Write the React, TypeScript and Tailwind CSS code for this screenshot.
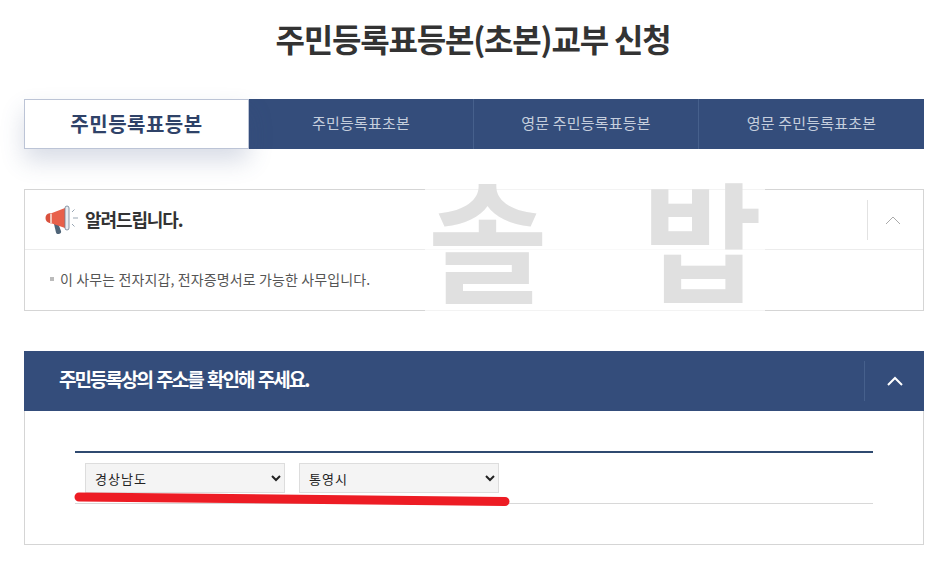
const tabs = ["주민등록표초본", "영문 주민등록표등본", "영문 주민등록표초본"];

function Megaphone() {
  return (
    <svg width="34" height="30" viewBox="0 0 34 30" className="shrink-0">
      <path d="M9 19l4-1 3 8c.5 1.500-.5 2.500-2 3-1.500.4-2.500-.2-3-1.500z" fill="#4f6478" />
      <path d="M20 3v20L7 18.500V8z" fill="#e8604a" />
      <path d="M7 8v10.500l-2.500-.5C2 17.500.5 15.500.5 13S2 8.500 4.500 8.300z" fill="#d9513d" />
      <path d="M5 8.500h2v10H5z" fill="#f4c4b8" />
      <rect x="20" y="1" width="4" height="24" rx="2" fill="#e9edf2" stroke="#6d7f92" strokeWidth="0.8" />
      <path d="M27 7l2.500-2.500M28 13h5M27 19l2.500 2.500" stroke="#9aa7b4" strokeWidth="1" fill="none" />
    </svg>
  );
}

function Chevron({ className, weight }: { className: string; weight: number }) {
  return (
    <svg width="16" height="10" viewBox="0 0 16 10" className={className} fill="none" stroke="currentColor" strokeWidth={weight}>
      <path d="M1 9l7-7 7 7" />
    </svg>
  );
}

export default function App() {
  return (
    <div className="relative h-[575px] w-[948px] overflow-hidden bg-white px-6 font-['Noto_Sans_CJK_KR','Noto_Sans',sans-serif]">
      <h1 className="flex h-[99px] items-start justify-center pr-[2px] pt-[13px] text-[32px] font-bold leading-[50px] tracking-[-1.2px] text-[#333333]">
        주민등록표등본(초본)교부 신청
      </h1>

      <div className="grid h-[50px] grid-cols-4 bg-[#344d7b]">
        <div className="flex items-center justify-center border border-[#bcc4d6] bg-white text-[20px] font-bold tracking-[0.5px] text-[#2f4268] shadow-[0_12px_24px_rgba(60,80,130,0.2)]">
          주민등록표등본
        </div>
        {tabs.map((tab) => (
          <div key={tab} className="flex items-center justify-center border-r border-[#46608c] pb-[2px] text-[15px] tracking-[0.2px] text-[#c5cedd] last:border-r-0">
            {tab}
          </div>
        ))}
      </div>

      <section className="mt-[40px] h-[122px] border border-[#d5d5d5]">
        <div className="flex h-[60px] items-center justify-between border-b border-[#ececec] pl-[20px]">
          <div className="flex items-center gap-[6px]">
            <Megaphone />
            <h2 className="text-[18px] font-bold tracking-[-1.1px] text-[#333333]">알려드립니다.</h2>
          </div>
          <div className="flex h-[40px] w-[56px] items-center justify-center border-l border-[#e2e2e2] pr-[5px]">
            <Chevron className="text-[#aaaaaa]" weight={1} />
          </div>
        </div>
        <p className="flex items-center gap-[6px] pl-[25px] pt-[18px] text-[14px] leading-[22px] tracking-[0.12px] text-[#555555]">
          <span className="h-[4px] w-[4px] bg-[#bbbbbb]" />
          이 사무는 전자지갑, 전자증명서로 가능한 사무입니다.
        </p>
      </section>

      <section className="mt-[40px] h-[194px] border-x border-b border-[#d5d5d5]">
        <div className="-mx-px flex h-[60px] items-center justify-between bg-[#344d7b] pl-[35px]">
          <h2 className="pb-[3px] text-[19px] font-bold tracking-[-2px] text-white [word-spacing:2px]">주민등록상의 주소를 확인해 주세요.</h2>
          <div className="flex h-[40px] w-[60px] items-center justify-center border-l border-[#46608c]">
            <Chevron className="text-white" weight={2} />
          </div>
        </div>
        <div className="mx-[50px] mt-[40px] flex h-[53px] gap-[14px] border-y border-b-[#d8d8d8] border-t-[#2f4a70] px-[10px] pt-[10px] [border-top-width:2px]">
          <select defaultValue="경상남도" className="h-[30px] w-[200px] border border-[#dddddd] bg-[#f4f4f4] px-[5px] text-[13px] tracking-[1px] text-[#222222]">
            <option>경상남도</option>
          </select>
          <select defaultValue="통영시" className="h-[30px] w-[200px] border border-[#dddddd] bg-[#f4f4f4] px-[5px] text-[13px] tracking-[1px] text-[#222222]">
            <option>통영시</option>
          </select>
        </div>
      </section>

      {/* red marker stroke over the selects */}
      <svg width="948" height="575" className="pointer-events-none absolute left-0 top-0">
        <path d="M79 497L505 501.500" stroke="#ed1c24" strokeWidth="9" strokeLinecap="round" fill="none" />
      </svg>

      {/* watermark */}
      <div className="pointer-events-none absolute left-[425px] top-[155px] flex h-[160px] w-[340px] items-center justify-between bg-white/70 px-[3px] text-[130px] font-bold leading-none text-[#e0e0e0]">
        <span>솔</span>
        <span>밥</span>
      </div>
    </div>
  );
}
